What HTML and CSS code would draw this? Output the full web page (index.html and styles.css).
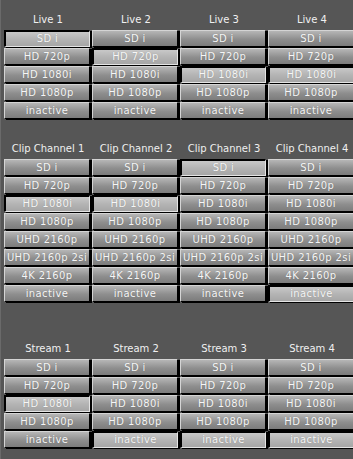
FILE: index.html
```html
<!DOCTYPE html>
<html lang="en">
<head>
<meta charset="UTF-8" />
<title>Video Format</title>
<link rel="stylesheet" href="styles.css">
</head>
<body>
<div class="panel">

  <!-- Live inputs -->
  <div class="group group-live">
    <div class="col">
      <div class="title">Live 1</div>
      <div class="btn on">SD i</div>
      <div class="btn">HD 720p</div>
      <div class="btn">HD 1080i</div>
      <div class="btn">HD 1080p</div>
      <div class="btn">inactive</div>
    </div>
    <div class="col">
      <div class="title">Live 2</div>
      <div class="btn">SD i</div>
      <div class="btn on">HD 720p</div>
      <div class="btn">HD 1080i</div>
      <div class="btn">HD 1080p</div>
      <div class="btn">inactive</div>
    </div>
    <div class="col">
      <div class="title">Live 3</div>
      <div class="btn">SD i</div>
      <div class="btn">HD 720p</div>
      <div class="btn on">HD 1080i</div>
      <div class="btn">HD 1080p</div>
      <div class="btn">inactive</div>
    </div>
    <div class="col">
      <div class="title">Live 4</div>
      <div class="btn">SD i</div>
      <div class="btn">HD 720p</div>
      <div class="btn on">HD 1080i</div>
      <div class="btn">HD 1080p</div>
      <div class="btn">inactive</div>
    </div>
  </div>

  <!-- Clip channels -->
  <div class="group group-clip">
    <div class="col">
      <div class="title">Clip Channel 1</div>
      <div class="btn">SD i</div>
      <div class="btn">HD 720p</div>
      <div class="btn on">HD 1080i</div>
      <div class="btn">HD 1080p</div>
      <div class="btn">UHD 2160p</div>
      <div class="btn">UHD 2160p 2si</div>
      <div class="btn">4K 2160p</div>
      <div class="btn">inactive</div>
    </div>
    <div class="col">
      <div class="title">Clip Channel 2</div>
      <div class="btn">SD i</div>
      <div class="btn">HD 720p</div>
      <div class="btn on">HD 1080i</div>
      <div class="btn">HD 1080p</div>
      <div class="btn">UHD 2160p</div>
      <div class="btn">UHD 2160p 2si</div>
      <div class="btn">4K 2160p</div>
      <div class="btn">inactive</div>
    </div>
    <div class="col">
      <div class="title">Clip Channel 3</div>
      <div class="btn on">SD i</div>
      <div class="btn">HD 720p</div>
      <div class="btn">HD 1080i</div>
      <div class="btn">HD 1080p</div>
      <div class="btn">UHD 2160p</div>
      <div class="btn">UHD 2160p 2si</div>
      <div class="btn">4K 2160p</div>
      <div class="btn">inactive</div>
    </div>
    <div class="col">
      <div class="title">Clip Channel 4</div>
      <div class="btn">SD i</div>
      <div class="btn">HD 720p</div>
      <div class="btn">HD 1080i</div>
      <div class="btn">HD 1080p</div>
      <div class="btn">UHD 2160p</div>
      <div class="btn">UHD 2160p 2si</div>
      <div class="btn">4K 2160p</div>
      <div class="btn on">inactive</div>
    </div>
  </div>

  <!-- Streams -->
  <div class="group group-stream">
    <div class="col">
      <div class="title">Stream 1</div>
      <div class="btn">SD i</div>
      <div class="btn">HD 720p</div>
      <div class="btn on">HD 1080i</div>
      <div class="btn">HD 1080p</div>
      <div class="btn">inactive</div>
    </div>
    <div class="col">
      <div class="title">Stream 2</div>
      <div class="btn">SD i</div>
      <div class="btn">HD 720p</div>
      <div class="btn">HD 1080i</div>
      <div class="btn">HD 1080p</div>
      <div class="btn on">inactive</div>
    </div>
    <div class="col">
      <div class="title">Stream 3</div>
      <div class="btn">SD i</div>
      <div class="btn">HD 720p</div>
      <div class="btn">HD 1080i</div>
      <div class="btn">HD 1080p</div>
      <div class="btn on">inactive</div>
    </div>
    <div class="col">
      <div class="title">Stream 4</div>
      <div class="btn">SD i</div>
      <div class="btn">HD 720p</div>
      <div class="btn">HD 1080i</div>
      <div class="btn">HD 1080p</div>
      <div class="btn on">inactive</div>
    </div>
  </div>

</div>
</body>
</html>
```

FILE: styles.css
```css
* {
  box-sizing: border-box;
  margin: 0;
  padding: 0;
}

html, body {
  width: 353px;
  height: 459px;
  overflow: hidden;
  background: #565656;
}

body {
  font-family: 'DejaVu Sans', Verdana, sans-serif;
  font-size: 10px;
  color: #f2f2f2;
}

.panel {
  height: 459px;
  border-left: 1px solid #6a6a6a;
  padding-left: 3px;
}

/* each block of four channels */
.group {
  display: grid;
  grid-template-columns: repeat(4, 88px);
}

.group-live {
  padding-top: 10px;
}

.group-clip {
  margin-top: 19px;
}

.group-stream {
  margin-top: 36px;
}

.title {
  height: 20px;
  line-height: 20px;
  text-align: center;
  white-space: nowrap;
  color: #f0f0f0;
}

/* format buttons */
.btn {
  width: 86px;
  height: 17px;
  margin-bottom: 1px;
  line-height: 15px;
  text-align: center;
  white-space: nowrap;
  letter-spacing: 0.4px;
  color: #f6f6f6;
  text-shadow: 0 0 1px rgba(0,0,0,0.25);
  background: linear-gradient(#b6b6b6, #8e8e8e 55%, #7c7c7c);
  border: 1px solid;
  border-color: #d4d4d4 #000 #000 #d4d4d4;
  box-shadow: 2px 1px 0 #000;
}

.btn.on {
  background: linear-gradient(#c8c8c8, #b4b4b4 50%, #a6a6a6);
  border-width: 2px 1px 1px 2px;
  border-color: #000 #e4e4e4 #e4e4e4 #000;
  line-height: 14px;
}
```
